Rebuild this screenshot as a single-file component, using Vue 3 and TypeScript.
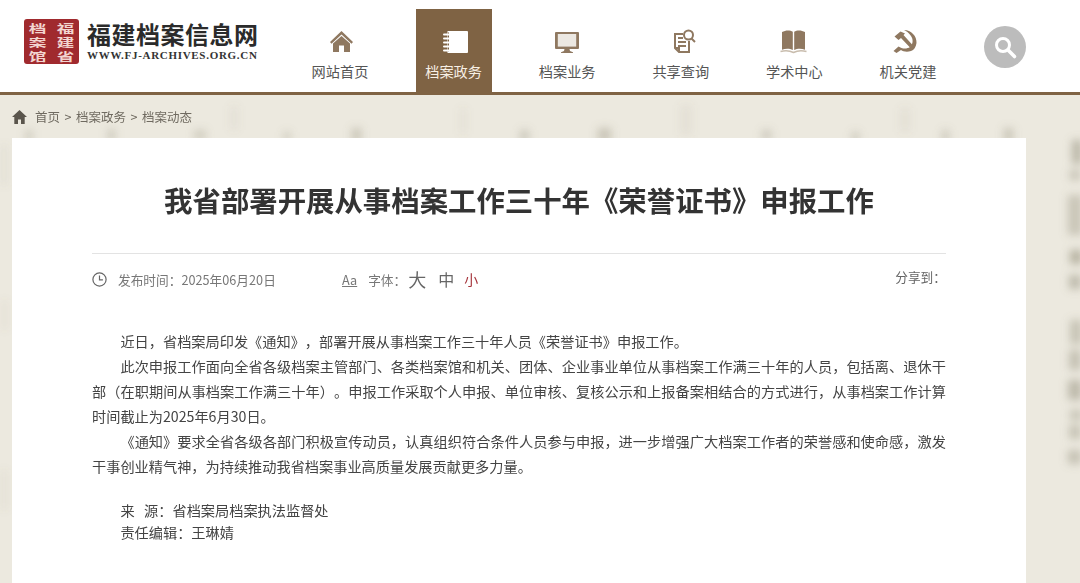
<template>
  <div class="page">
    <svg class="paper" width="1080" height="583" aria-hidden="true">
      <defs>
        <filter id="soft" x="-80%" y="-80%" width="260%" height="260%">
          <feGaussianBlur stdDeviation="4" />
        </filter>
      </defs>
      <g filter="url(#soft)" fill="#8a8570">
        <rect v-for="(m, i) in marks" :key="i" :x="m[0]" :y="m[1]" :width="m[2]" :height="m[3]" :opacity="m[4]" />
      </g>
    </svg>
    <header class="header">
      <a class="logo">
        <div class="seal">
          <span v-for="c in sealChars" :key="c">{{ c }}</span>
        </div>
        <div class="logo-text">
          <div class="logo-title">福建档案信息网</div>
          <div class="logo-url">WWW.FJ-ARCHIVES.ORG.CN</div>
        </div>
      </a>
      <nav class="nav">
        <a v-for="item in navItems" :key="item.label" class="nav-item" :class="{ active: item.active }">
          <svg class="nav-icon" width="30" height="30" viewBox="0 0 30 30" v-html="item.icon"></svg>
          <span>{{ item.label }}</span>
        </a>
      </nav>
      <div class="search">
        <svg width="26" height="26" viewBox="0 0 26 26" fill="none" stroke="#fff">
          <circle cx="11" cy="11" r="6.500" stroke-width="3" />
          <path d="M16 16l6.500 6.500" stroke-width="3.600" stroke-linecap="round" />
        </svg>
      </div>
    </header>

    <main class="main">
      <div class="crumbs">
        <svg width="15" height="14" viewBox="0 0 15 14" fill="#5a554c">
          <path d="M7.500 0L0 7h2.300v7h3.700V9.500h3V14h3.700V7H15z" />
        </svg>
        <span>首页</span><i>&gt;</i><span>档案政务</span><i>&gt;</i><span>档案动态</span>
      </div>

      <article class="card">
        <h1 class="title">我省部署开展从事档案工作三十年《荣誉证书》申报工作</h1>
        <div class="meta">
          <svg class="clock" width="15" height="15" viewBox="0 0 15 15" fill="none" stroke="#666" stroke-width="1.200">
            <circle cx="7.500" cy="7.500" r="6.600" />
            <path d="M7.500 3.600v4.200h3.400" />
          </svg>
          <span class="date">发布时间：2025年06月20日</span>
          <u class="aa">Aa</u>
          <span class="font-label">字体：</span>
          <span class="size-lg">大</span>
          <span class="size-md">中</span>
          <span class="size-sm">小</span>
          <span class="share">分享到：</span>
        </div>
        <div class="body">
          <p>近日，省档案局印发《通知》，部署开展从事档案工作三十年人员《荣誉证书》申报工作。</p>
          <p>此次申报工作面向全省各级档案主管部门、各类档案馆和机关、团体、企业事业单位从事档案工作满三十年的人员，包括离、退休干部（在职期间从事档案工作满三十年）。申报工作采取个人申报、单位审核、复核公示和上报备案相结合的方式进行，从事档案工作计算时间截止为2025年6月30日。</p>
          <p>《通知》要求全省各级各部门积极宣传动员，认真组织符合条件人员参与申报，进一步增强广大档案工作者的荣誉感和使命感，激发干事创业精气神，为持续推动我省档案事业高质量发展贡献更多力量。</p>
        </div>
        <div class="source">
          <p>来&nbsp;&nbsp;&nbsp;源：省档案局档案执法监督处</p>
          <p>责任编辑：王琳婧</p>
        </div>
      </article>
    </main>
  </div>
</template>

<script setup lang="ts">
interface NavItem {
  label: string
  icon: string
  active?: boolean
}

// seal reads right column first: 福建省 档案馆
const sealChars = ['档', '福', '案', '建', '馆', '省']

const brown = '#8f7860'

// x, y, w, h, opacity of the faint ink marks in the paper
const marks: number[][] = [
  [1072, 140, 10, 24, 0.5], [1070, 170, 10, 10, 0.4], [1068, 195, 14, 40, 0.36],
  [1070, 250, 12, 14, 0.55], [1069, 275, 12, 14, 0.46], [1070, 320, 12, 24, 0.38],
  [1069, 350, 12, 20, 0.4], [1068, 380, 14, 20, 0.46], [1070, 410, 12, 10, 0.38],
  [1069, 425, 12, 14, 0.38], [1068, 450, 13, 14, 0.4],
  [26, 130, 6, 12, 0.32], [108, 129, 7, 12, 0.32], [194, 130, 12, 10, 0.28],
  [284, 132, 6, 10, 0.32], [352, 128, 9, 14, 0.36], [520, 130, 9, 12, 0.32],
  [598, 128, 13, 14, 0.36], [762, 130, 9, 10, 0.32], [852, 132, 7, 10, 0.32],
  [942, 130, 7, 12, 0.32], [1004, 128, 9, 14, 0.36], [460, 108, 6, 26, 0.08],
  [680, 105, 12, 30, 0.08], [230, 106, 8, 24, 0.08], [900, 108, 10, 24, 0.08],
  [1, 145, 6, 40, 0.1], [2, 300, 5, 30, 0.08], [1, 470, 6, 40, 0.08]
]

const navItems: NavItem[] = [
  {
    label: '网站首页',
    icon: `<path fill="${brown}" d="M16.500 5L5 16l1.500 1.800L16.500 8.500l10 9.300L28 16z"/><path fill="${brown}" d="M8 17.500L16.500 10l8.500 7.500V26h-6v-6.500h-5V26H8z"/>`
  },
  {
    label: '档案政务',
    active: true,
    icon: `<path fill="#fff" d="M8.500 5h19.500a1 1 0 0 1 1 1v20a1 1 0 0 1-1 1H8.500z"/><path fill="none" stroke="#7f6344" stroke-width="1" d="M9.500 6.500v19"/><path fill="none" stroke="#fff" stroke-width="2" stroke-linecap="round" d="M5 8.500h6M5 12.500h6M5 16.500h6M5 20.500h6M5 24.500h6"/>`
  },
  {
    label: '档案业务',
    icon: `<path fill="#ece8e2" d="M5 8h20v12H5z"/><path fill="${brown}" fill-rule="evenodd" d="M4 6h22a1 1 0 0 1 1 1v15a1 1 0 0 1-1 1H4a1 1 0 0 1-1-1V7a1 1 0 0 1 1-1zm1.800 2v12.500h18.400V8z"/><path fill="${brown}" d="M12.500 23h5l.5 2 3 1.200V27H9v-.8l3-1.200z"/>`
  },
  {
    label: '共享查询',
    icon: `<g fill="none" stroke="${brown}" stroke-width="2"><path d="M17 8H9v14l4 4h10V15"/><path d="M9 22h4v4"/><path d="M12 12h5M12 16h8M12 20h8"/><circle cx="22.500" cy="9" r="4.500"/><path d="M25.500 12.500l3.500 3.500"/></g>`
  },
  {
    label: '学术中心',
    icon: `<path fill="${brown}" d="M3 6c3.500-2 8-2.200 10.800-.2V24c-3-1.500-7.500-1.500-10.800-.2zM26 6c-3.500-2-8-2.200-10.800-.2V24c3-1.500 7.500-1.500 10.800-.2z"/><path fill="none" stroke="#c9bdae" stroke-width="1.500" d="M1.500 25.500c4-1 9-1 13 1 4-2 9-2 13-1"/>`
  },
  {
    label: '机关党建',
    icon: `<path fill="${brown}" d="M11 4C18 4 24 10 23.500 17C23 21 21 24 18 25C14 26.500 10 25.500 8 24L3.500 27L.5 25L5.500 20.500L8.500 22C11.500 23 15 22.500 17 21C20 18.500 20.500 13.500 18 10C16 7 13.500 5 11 4Z"/><path fill="${brown}" d="M1.500 10.500L7.500 5.500L12 7.500L10.500 9L19.500 19L17 21.500L8 12L5.500 14Z"/>`
  }
]
</script>

<style scoped>
.page {
  position: relative;
  min-height: 583px;
  display: flex;
  flex-direction: column;
  font-family: "Noto Sans CJK SC", "Liberation Sans", sans-serif;
  color: #444;
  text-spacing-trim: space-all;
}

.paper {
  position: absolute;
  top: 0;
  left: 0;
}

.header {
  position: relative;
  height: 92px;
  background: #fff;
  border-bottom: 3px solid #7f6344;
  display: flex;
  padding-left: 24px;
  box-sizing: content-box;
}

.logo {
  display: flex;
  align-items: flex-start;
  padding-top: 19px;
  width: 278px;
  flex: none;
}

.seal {
  width: 55px;
  height: 45px;
  background: #a02a2e;
  border-radius: 3px;
  display: grid;
  grid-template-columns: 1fr 1fr;
  grid-template-rows: repeat(3, 14px);
  align-content: center;
  justify-items: center;
  align-items: center;
  color: #f2d5d0;
  font-size: 11px;
  line-height: 14px;
  font-weight: 700;
}

.seal span {
  transform: scaleX(1.6);
}

.logo-text {
  margin-left: 8px;
  width: 172px;
}

.logo-title {
  font-size: 24px;
  line-height: 30px;
  letter-spacing: 0.5px;
  font-weight: 700;
  color: #2b2b2b;
  white-space: nowrap;
}

.logo-url {
  font-family: "Liberation Serif", serif;
  font-weight: 700;
  font-size: 11px;
  line-height: 12px;
  letter-spacing: 0.7px;
  color: #333;
  white-space: nowrap;
}

.nav {
  display: flex;
  gap: 37.600px;
  margin-top: 9px;
  flex: none;
}

.nav-item {
  width: 76px;
  height: 83px;
  display: flex;
  flex-direction: column;
  align-items: center;
  font-size: 14.200px;
  line-height: 20px;
  color: #555;
  white-space: nowrap;
}

.nav-item.active {
  background: #7f6344;
  color: #f7efe4;
}

.nav-icon {
  margin-top: 17px;
  margin-bottom: 5px;
  flex: none;
}

.search {
  width: 42px;
  height: 42px;
  border-radius: 50%;
  background: #bcbcbc;
  margin: 26px 0 0 38px;
  display: flex;
  align-items: center;
  justify-content: center;
  flex: none;
}

.main {
  position: relative;
  flex: 1;
  display: flex;
  flex-direction: column;
  padding: 0 54px 0 12px;
}

.crumbs {
  height: 43px;
  display: flex;
  align-items: center;
  font-size: 12.500px;
  color: #6f6a60;
}

.crumbs svg {
  margin-right: 8px;
}

.crumbs i {
  font-style: normal;
  margin: 0 4.500px;
}

.card {
  flex: 1;
  background: #fff;
  padding: 0 80px;
}

.title {
  margin: 43px 0 0;
  font-size: 28.400px;
  line-height: 38px;
  font-weight: 700;
  text-align: center;
  color: #333;
  white-space: nowrap;
}

.meta {
  margin-top: 34px;
  border-top: 1px solid #e3e3e3;
  height: 50px;
  display: flex;
  align-items: center;
  font-size: 12.700px;
  color: #777;
}

.clock {
  margin-right: 11px;
  flex: none;
}

.date {
  width: 224px;
}

.aa {
  margin-right: 11px;
}

.font-label {
  width: 40px;
}

.size-lg {
  font-size: 18px;
  margin-right: 12px;
  color: #666;
}

.size-md {
  font-size: 16px;
  margin-right: 10px;
  color: #666;
}

.size-sm {
  font-size: 14px;
  color: #a5333a;
}

.share {
  margin-left: auto;
  position: relative;
  top: -3px;
  color: #666;
}

.body {
  margin-top: 25px;
  font-size: 14.200px;
  line-height: 25px;
  color: #444;
}

.body p {
  margin: 0;
  text-indent: 2em;
  text-align: justify;
}

.source {
  margin-top: 20px;
  font-size: 14.200px;
  line-height: 22px;
  color: #444;
}

.source p {
  margin: 0;
  text-indent: 2em;
}
</style>

<style>
html,
body {
  margin: 0;
  height: 583px;
  overflow: hidden;
  background-color: #ece9df;
}
</style>
